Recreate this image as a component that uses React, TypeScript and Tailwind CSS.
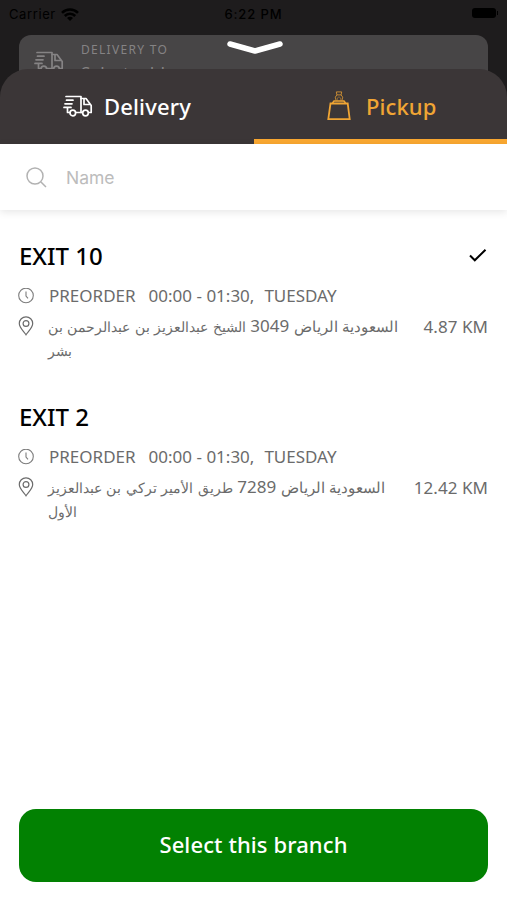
import type { ReactNode } from "react";

type Branch = {
  name: string;
  city: string;
  code: string;
  street: string;
  streetEnd: string;
  distance: string;
  selected: boolean;
};

const branches: Branch[] = [
  {
    name: "EXIT 10",
    city: "السعودية الرياض",
    code: "3049",
    street: "الشيخ عبدالعزيز بن عبدالرحمن بن",
    streetEnd: "بشر",
    distance: "4.87 KM",
    selected: true,
  },
  {
    name: "EXIT 2",
    city: "السعودية الرياض",
    code: "7289",
    street: "طريق الأمير تركي بن عبدالعزيز",
    streetEnd: "الأول",
    distance: "12.42 KM",
    selected: false,
  },
];

function TruckIcon({ className }: { className: string }) {
  return (
    <svg
      viewBox="0 0 30 22"
      fill="none"
      stroke="currentColor"
      strokeWidth="1.7"
      strokeLinecap="round"
      strokeLinejoin="round"
      className={className}
    >
      <path d="M3 1.500h15v16h-5M3.500 5.200h6.500M2 8.800h7M1 12.400h7M4.500 12.400V17.500h2" />
      <path d="M18 3.500h5l5.200 7v7H26M18 17.500h1M21 4v5.500h6" />
      <circle cx="9.800" cy="18" r="2.800" />
      <circle cx="22.500" cy="18" r="2.800" />
    </svg>
  );
}

function BagIcon() {
  return (
    <svg viewBox="0 0 24 30" fill="none" stroke="currentColor" className="h-[30px] w-6 shrink-0">
      <path d="M3.500 12.500h17.200L22.700 28.200H1.300z" strokeWidth="1.800" />
      <path d="M5.500 12l1.500-2h10l1.500 2" strokeWidth="1.500" />
      <path d="M9.300 0.900h5.400l-.6 3 1.600 2.300-.8 3.300M9.300 0.900l.6 3-1.600 2.300.8 3.300M9.900 3.900h4.200" strokeWidth="1" opacity="0.750" />
      <path d="M10.300 9.500V7l1.700-1.200L13.700 7v2.500" strokeWidth="0.700" opacity="0.600" />
    </svg>
  );
}

function ClockIcon() {
  return (
    <svg viewBox="0 0 16 16" fill="none" stroke="currentColor" className="size-4 shrink-0 text-[#7d7d7d]">
      <circle cx="8" cy="7.500" r="7.300" strokeWidth="1.100" />
      <path d="M8 3.500V8l2 2.300" strokeWidth="1.100" />
    </svg>
  );
}

function PinIcon() {
  return (
    <svg viewBox="0 0 16 20" fill="none" stroke="currentColor" className="mt-[2px] h-5 w-4 shrink-0">
      <path
        d="M8 18.800C6 15.500 1.300 11.800 1.300 7.500a6.700 6.700 0 0 1 13.400 0C14.700 11.800 10 15.500 8 18.800z"
        strokeWidth="1.200"
      />
      <circle cx="8" cy="7.500" r="2.900" strokeWidth="1.200" />
    </svg>
  );
}

function StatusBar() {
  return (
    <div className="grid h-[35px] shrink-0 grid-cols-3 px-[9px] pt-[4px] font-['Inter'] text-[13px] leading-5 text-black">
      <div className="flex items-center gap-[5px] self-start">
        <span className="tracking-[0.6px]">Carrier</span>
        <svg viewBox="0 0 18 13" className="h-[13px] w-[18px]" fill="none" stroke="currentColor" strokeWidth="2.600">
          <path d="M1 4.800a11.300 11.300 0 0 1 16 0M3.800 8a7.300 7.300 0 0 1 10.400 0" />
          <path d="M9 13L6 9.900a4.200 4.200 0 0 1 6 0z" fill="currentColor" stroke="none" />
        </svg>
      </div>
      <span className="text-center font-medium tracking-[0.9px] whitespace-nowrap">6:22 PM</span>
      <div className="flex items-start justify-end pt-[4px]">
        <span className="h-[10px] w-[24px] rounded-[3px] bg-black" />
        <span className="mt-[3px] ml-px h-1 w-px bg-black" />
      </div>
    </div>
  );
}

function Tab({ icon, label, active }: { icon: ReactNode; label: string; active: boolean }) {
  return (
    <button
      className={
        active
          ? "flex h-[74.500px] w-[253px] items-center border-b-[5px] border-[#faa831] pt-[5px] pl-[73px] text-[#f0a534]"
          : "flex h-[74.500px] w-[254px] items-center border-b-[5px] border-transparent pt-[5px] pl-[63px] text-white"
      }
    >
      {icon}
      <span
        className={
          active
            ? "ml-[15px] text-[22px] font-medium tracking-[0.1px]"
            : "ml-[11px] text-[22px] font-medium tracking-[0.15px]"
        }
      >
        {label}
      </span>
    </button>
  );
}

function BranchRow({ branch }: { branch: Branch }) {
  return (
    <li className="h-[161px] pr-[19px] pl-[18px] text-[17px] text-[#6b6b6b]">
      <div className="flex h-[34px] items-center justify-between pl-px text-black">
        <h2 className="text-2xl font-medium">{branch.name}</h2>
        {branch.selected && (
          <svg viewBox="0 0 18 14" fill="none" stroke="currentColor" strokeWidth="2" className="mr-px h-[14px] w-[18px]">
            <path d="M1 6.500l4.800 4.800L16.500 0.700" />
          </svg>
        )}
      </div>
      <div className="mt-[11px] flex h-6 items-center">
        <ClockIcon />
        <span className="ml-[15px]">PREORDER</span>
        <span className="ml-[13px]">00:00 - 01:30,</span>
        <span className="ml-[10px]">TUESDAY</span>
      </div>
      <div className="mt-[6px] flex items-start">
        <PinIcon />
        <p dir="rtl" className="ml-[14px] text-left text-[14.1px] leading-6 whitespace-nowrap [word-spacing:0.8px]">
          <span className="block">
            <span className="text-[14.6px]">{branch.city}</span> <span className="text-[17px]">{branch.code}</span>{" "}
            {branch.street}
          </span>
          <span className="block">{branch.streetEnd}</span>
        </p>
        <span className="mt-px ml-auto leading-6 tracking-[0.05px] whitespace-nowrap">{branch.distance}</span>
      </div>
    </li>
  );
}

export default function App() {
  return (
    <main className="flex h-[900px] w-[507px] flex-col overflow-hidden bg-[#1e1c1d] font-['Noto_Sans',sans-serif]">
      <StatusBar />
      <div className="relative mx-[19px] -mb-[6px] flex h-10 shrink-0 rounded-t-[12px] bg-[#474546] text-[#858384]">
        <TruckIcon className="mt-[16px] ml-[15px] h-[22px] w-[30px] shrink-0" />
        <div className="ml-[17px] h-10">
          <p className="mt-[6px] text-xs leading-[18px] tracking-[1.3px]">DELIVERY TO</p>
          <p className="mt-[2px] text-[17px] leading-6 tracking-[0.2px]">Select address</p>
        </div>
        <svg
          viewBox="0 0 58 16"
          fill="none"
          stroke="white"
          strokeWidth="5.500"
          strokeLinecap="round"
          strokeLinejoin="round"
          className="absolute top-[5px] left-[207px] h-4 w-[58px]"
        >
          <path d="M4 4l25 7 25-7" />
        </svg>
      </div>
      <section className="relative flex flex-1 flex-col overflow-hidden rounded-t-[28px] bg-[#3b3637]">
        <div className="flex shrink-0">
          <Tab icon={<TruckIcon className="h-[22px] w-[30px] shrink-0" />} label="Delivery" active={false} />
          <Tab icon={<BagIcon />} label="Pickup" active />
        </div>
        <div className="flex flex-1 flex-col bg-white">
          <label className="flex h-[66.500px] shrink-0 items-center pl-[26px] text-[#b2b2b2] shadow-[0_2px_8px_rgba(0,0,0,0.1)]">
            <svg viewBox="0 0 21 21" fill="none" stroke="currentColor" strokeWidth="1.500" className="mt-px size-[21px]">
              <circle cx="9" cy="9" r="8" />
              <path d="M15 15l5 5" />
            </svg>
            <input
              placeholder="Name"
              className="mt-[2px] ml-[19px] font-['Inter'] text-[17.5px] placeholder:text-[#bcbcbc]"
            />
          </label>
          <ul className="mt-[29px] flex-1">
            {branches.map((branch) => (
              <BranchRow key={branch.name} branch={branch} />
            ))}
          </ul>
          <button className="mx-[19px] mb-[18.500px] h-[73px] shrink-0 rounded-[17px] bg-[#028102] pb-[2px] text-[22px] font-medium tracking-[0.1px] text-white">
            Select this branch
          </button>
        </div>
      </section>
    </main>
  );
}
